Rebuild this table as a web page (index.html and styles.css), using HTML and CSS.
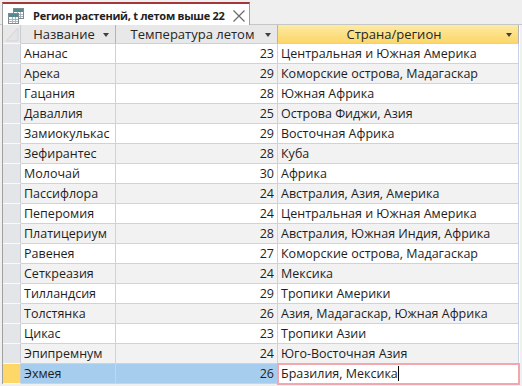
FILE: index.html
```html
<!DOCTYPE html>
<html lang="ru">
<head>
<meta charset="utf-8">
<link rel="stylesheet" href="styles.css">
</head>
<body>
<div class="tabbar">
  <div class="tab">
    <svg class="tab-icon" width="18" height="18" viewBox="0 0 18 18">
      <rect x="6.5" y="1.5" width="10" height="10" fill="#fff" stroke="#7d8a90"/>
      <rect x="7" y="2" width="9" height="3" fill="#4f8a96"/>
      <path d="M7 7.5h9M7 9.5h9M10.5 5v6M13.5 5v6" stroke="#a9b4b8" stroke-width="1"/>
      <rect x="1.5" y="6.5" width="10" height="10" fill="#fff" stroke="#7d8a90"/>
      <rect x="2" y="7" width="9" height="3" fill="#4f8a96"/>
      <path d="M2 12.5h9M2 14.5h9M5.5 10v6M8.5 10v6" stroke="#a9b4b8" stroke-width="1"/>
    </svg>
    <span class="tab-title">Регион растений, t летом выше 22</span>
    <svg class="tab-close" width="14" height="14" viewBox="0 0 14 14">
      <path d="M1.5 1.5l11 11M12.5 1.5l-11 11" stroke="#6a6a6a" stroke-width="1.2"/>
    </svg>
  </div>
</div>
<div class="sheet">
  <div class="row head">
    <div class="sel corner">
      <svg width="17" height="18" viewBox="0 0 17 18"><path d="M3 16L15 3V16Z" fill="#e3e4e6" stroke="#d3d5d8" stroke-width="1"/></svg>
    </div>
    <div class="hc"><span class="hl">Название</span><span class="arrow"></span></div>
    <div class="hc"><span class="hl">Температура летом</span><span class="arrow"></span></div>
    <div class="hc cur"><span class="hl">Страна/регион</span><span class="arrow"></span></div>
  </div>
  <div class="row"><div class="sel"></div><div class="c">Ананас</div><div class="c n">23</div><div class="c">Центральная и Южная Америка</div></div>
  <div class="row alt"><div class="sel"></div><div class="c">Арека</div><div class="c n">29</div><div class="c">Коморские острова, Мадагаскар</div></div>
  <div class="row"><div class="sel"></div><div class="c">Гацания</div><div class="c n">28</div><div class="c">Южная Африка</div></div>
  <div class="row alt"><div class="sel"></div><div class="c">Даваллия</div><div class="c n">25</div><div class="c">Острова Фиджи, Азия</div></div>
  <div class="row"><div class="sel"></div><div class="c">Замиокулькас</div><div class="c n">29</div><div class="c">Восточная Африка</div></div>
  <div class="row alt"><div class="sel"></div><div class="c">Зефирантес</div><div class="c n">28</div><div class="c">Куба</div></div>
  <div class="row"><div class="sel"></div><div class="c">Молочай</div><div class="c n">30</div><div class="c">Африка</div></div>
  <div class="row alt"><div class="sel"></div><div class="c">Пассифлора</div><div class="c n">24</div><div class="c">Австралия, Азия, Америка</div></div>
  <div class="row"><div class="sel"></div><div class="c">Пеперомия</div><div class="c n">24</div><div class="c">Центральная и Южная Америка</div></div>
  <div class="row alt"><div class="sel"></div><div class="c">Платицериум</div><div class="c n">28</div><div class="c">Австралия, Южная Индия, Африка</div></div>
  <div class="row"><div class="sel"></div><div class="c">Равенея</div><div class="c n">27</div><div class="c">Коморские острова, Мадагаскар</div></div>
  <div class="row alt"><div class="sel"></div><div class="c">Сеткреазия</div><div class="c n">24</div><div class="c">Мексика</div></div>
  <div class="row"><div class="sel"></div><div class="c">Тилландсия</div><div class="c n">29</div><div class="c">Тропики Америки</div></div>
  <div class="row alt"><div class="sel"></div><div class="c">Толстянка</div><div class="c n">26</div><div class="c">Азия, Мадагаскар, Южная Африка</div></div>
  <div class="row"><div class="sel"></div><div class="c">Цикас</div><div class="c n">23</div><div class="c">Тропики Азии</div></div>
  <div class="row alt"><div class="sel"></div><div class="c">Эпипремнум</div><div class="c n">24</div><div class="c">Юго-Восточная Азия</div></div>
  <div class="row active"><div class="sel"></div><div class="c">Эхмея</div><div class="c n">26</div><div class="c edit">Бразилия, Мексика<span class="caret"></span></div></div>
</div>
</body>
</html>
```
FILE: styles.css
```css
html, body {
  margin: 0;
  padding: 0;
}
body {
  width: 522px;
  height: 386px;
  overflow: hidden;
  background: #f0f0f0;
  font-family: "Open Sans", "Noto Sans", sans-serif;
  color: #1e1e1e;
}
.tabbar {
  height: 25px;
  padding: 2px 0 0 2px;
  box-sizing: border-box;
  border-bottom: 1px solid #c6c6c6;
  background: #efefef;
  display: flex;
}
.tab {
  width: 248px;
  height: 24px;
  box-sizing: border-box;
  background: #fff;
  border-top: 2px solid #a4373a;
  border-left: 1px solid #a0a0a0;
  border-right: 1px solid #a0a0a0;
  display: flex;
  align-items: center;
  padding-left: 4px;
  margin-bottom: -1px;
}
.tab-icon {
  flex: none;
  margin-top: 1px;
}
.tab-title {
  flex: 0 1 auto;
  font-weight: bold;
  font-size: 11px;
  margin-left: 8px;
  color: #222;
  letter-spacing: -0.25px;
  white-space: nowrap;
  overflow: hidden;
}
.tab-close {
  flex: none;
  margin-left: auto;
  margin-right: 3px;
  margin-top: 2px;
}
.sheet {
  margin-left: 2px;
  width: 517px;
  border-left: 1px solid #a0a0a0;
  background: #fff;
}
.row {
  display: grid;
  grid-template-columns: 18px 95px 162px 241px;
  height: 20px;
  font-size: 12.5px;
}
.row > div {
  box-sizing: border-box;
  border-right: 1px solid #c8d3e8;
  border-bottom: 1px solid #c8d3e8;
  white-space: nowrap;
  overflow: hidden;
}
.c {
  padding: 0 3px;
  line-height: 19px;
}
.n {
  text-align: right;
}
.alt .c {
  background: #f2f2f2;
}
.sel {
  background: #e4e5e8;
  border-right-color: #c9ccd2 !important;
  border-bottom-color: #fafafa !important;
}
.head {
  height: 19px;
}
.head > div {
  background: #e8e8e8;
  border-right: 1px solid #b4b4b4;
  border-bottom: 1px solid #d0d0d0;
}
.corner {
  display: flex;
  align-items: flex-end;
}
.corner svg {
  display: block;
}
.hc {
  display: flex;
  align-items: center;
  padding: 0 6px 0 4px;
  color: #262626;
  font-size: 13px;
}
.hl {
  flex: 1;
  text-align: center;
  line-height: 18px;
}
.arrow {
  width: 0;
  height: 0;
  border-left: 3.5px solid transparent;
  border-right: 3.5px solid transparent;
  border-top: 4px solid #404040;
  margin-top: 1px;
}
.head > .cur {
  background: linear-gradient(#fdeaa5, #fcd668);
}
.active .c {
  background: #a6cdee;
}
.active .sel {
  background: #fdd868;
}
.active .c.edit {
  background: #fff;
  outline: 2px solid #f3a6ab;
  outline-offset: -1px;
  position: relative;
}
.caret {
  display: inline-block;
  width: 1px;
  height: 15px;
  background: #000;
  vertical-align: -3px;
}
```
